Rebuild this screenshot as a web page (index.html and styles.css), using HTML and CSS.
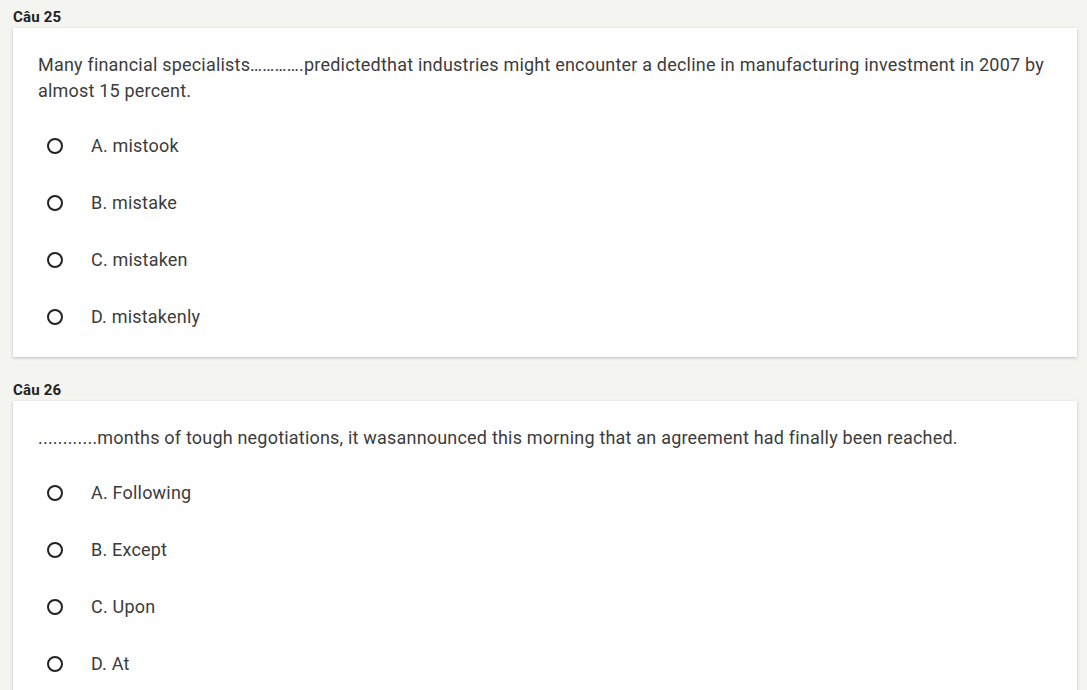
FILE: index.html
```html
<!DOCTYPE html>
<html>
<head>
<meta charset="utf-8">
<link rel="stylesheet" href="styles.css">
</head>
<body>
<div class="page">
  <section class="question">
    <div class="q-title">Câu 25</div>
    <div class="card">
      <p class="q-text">Many financial specialists………….predictedthat industries might encounter a decline in manufacturing investment in 2007 by almost 15 percent.</p>
      <ul class="options">
        <li class="option"><span class="radio"></span><span class="opt-label">A. mistook</span></li>
        <li class="option"><span class="radio"></span><span class="opt-label">B. mistake</span></li>
        <li class="option"><span class="radio"></span><span class="opt-label">C. mistaken</span></li>
        <li class="option"><span class="radio"></span><span class="opt-label">D. mistakenly</span></li>
      </ul>
    </div>
  </section>
  <section class="question">
    <div class="q-title">Câu 26</div>
    <div class="card">
      <p class="q-text">............months of tough negotiations, it wasannounced this morning that an agreement had finally been reached.</p>
      <ul class="options">
        <li class="option"><span class="radio"></span><span class="opt-label">A. Following</span></li>
        <li class="option"><span class="radio"></span><span class="opt-label">B. Except</span></li>
        <li class="option"><span class="radio"></span><span class="opt-label">C. Upon</span></li>
        <li class="option"><span class="radio"></span><span class="opt-label">D. At</span></li>
      </ul>
    </div>
  </section>
</div>
</body>
</html>
```
FILE: styles.css
```css
html, body {
  margin: 0;
  padding: 0;
  background: #f4f4f1;
  font-family: Roboto, "Liberation Sans", sans-serif;
  color: #3a3a3a;
}
.page {
  padding: 6px 10px 0 13px;
  display: flex;
  flex-direction: column;
  gap: 22px;
}
.q-title {
  font-size: 15px;
  font-weight: 700;
  letter-spacing: 0.2px;
  color: #222;
  line-height: 22px;
  height: 22px;
}
.card {
  background: #fff;
  box-shadow: 0 1px 3px rgba(0,0,0,0.22);
  padding: 24px 25px 12px 25px;
}
.q-text {
  margin: 0;
  font-size: 18px;
  letter-spacing: 0.2px;
  line-height: 26px;
  color: #3c3c3c;
}
.options {
  list-style: none;
  margin: 13px 0 0 0;
  padding: 0;
}
.option {
  height: 57px;
  display: flex;
  align-items: center;
}
.radio {
  box-sizing: border-box;
  width: 16px;
  height: 16px;
  border: 2px solid #222;
  border-radius: 50%;
  margin-left: 9px;
  margin-right: 28px;
  flex: none;
}
.opt-label {
  font-size: 18px;
  letter-spacing: 0.2px;
  color: #3c3c3c;
}
```
